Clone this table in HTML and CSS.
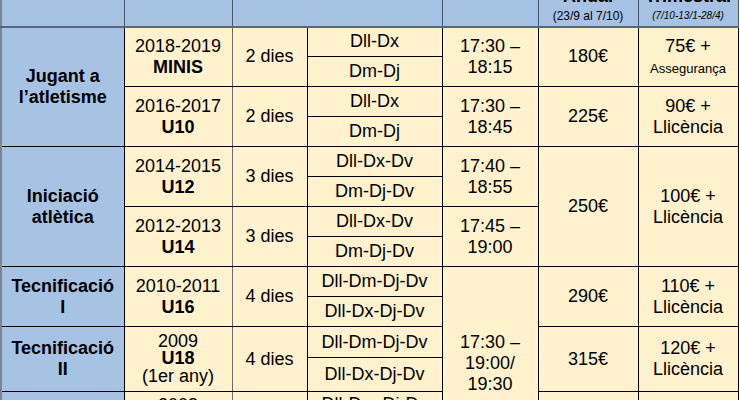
FILE: index.html
```html
<!DOCTYPE html>
<html lang="ca">
<head>
<meta charset="utf-8">
<title>Horaris i quotes</title>
<link rel="stylesheet" href="styles.css">
</head>
<body>
<table class="sched">
  <colgroup>
    <col class="c-grp"><col class="c-year"><col class="c-ndays"><col class="c-days"><col class="c-time"><col class="c-fee"><col class="c-fee2">
  </colgroup>
  <thead>
    <tr class="head">
      <th class="h-first"></th>
      <th></th>
      <th colspan="2"></th>
      <th></th>
      <th><div class="h-title">Anual</div><div class="h-sub">(23/9 al 7/10)</div></th>
      <th><div class="h-title">Trimestral</div><div class="h-sub h-it">(7/10-13/1-28/4)</div></th>
    </tr>
  </thead>
  <tbody>
    <tr class="r30">
      <td class="grp" rowspan="4">Jugant a<br>l’atletisme</td>
      <td class="year" rowspan="2">2018-2019<br><b>MINIS</b></td>
      <td class="nd" rowspan="2">2 dies</td>
      <td class="day">Dll-Dx</td>
      <td rowspan="2">17:30 –<br>18:15</td>
      <td rowspan="2">180€</td>
      <td rowspan="2">75€ +<br><span class="small">Assegurança</span></td>
    </tr>
    <tr class="r30"><td class="day">Dm-Dj</td></tr>
    <tr class="r30">
      <td class="year" rowspan="2">2016-2017<br><b>U10</b></td>
      <td class="nd" rowspan="2">2 dies</td>
      <td class="day">Dll-Dx</td>
      <td rowspan="2">17:30 –<br>18:45</td>
      <td rowspan="2">225€</td>
      <td rowspan="2">90€ +<br>Llicència</td>
    </tr>
    <tr class="r30"><td class="day">Dm-Dj</td></tr>

    <tr class="r30">
      <td class="grp" rowspan="4">Iniciació<br>atlètica</td>
      <td class="year" rowspan="2">2014-2015<br><b>U12</b></td>
      <td class="nd" rowspan="2">3 dies</td>
      <td class="day">Dll-Dx-Dv</td>
      <td rowspan="2">17:40 –<br>18:55</td>
      <td rowspan="4">250€</td>
      <td rowspan="4">100€ +<br>Llicència</td>
    </tr>
    <tr class="r30"><td class="day">Dm-Dj-Dv</td></tr>
    <tr class="r30">
      <td class="year" rowspan="2">2012-2013<br><b>U14</b></td>
      <td class="nd" rowspan="2">3 dies</td>
      <td class="day">Dll-Dx-Dv</td>
      <td rowspan="2">17:45 –<br>19:00</td>
    </tr>
    <tr class="r30"><td class="day">Dm-Dj-Dv</td></tr>

    <tr class="r30">
      <td class="grp" rowspan="2">Tecnificació<br>I</td>
      <td class="year" rowspan="2">2010-2011<br><b>U16</b></td>
      <td class="nd" rowspan="2">4 dies</td>
      <td class="day">Dll-Dm-Dj-Dv</td>
      <td rowspan="6">17:30 –<br>19:00/<br>19:30</td>
      <td rowspan="2">290€</td>
      <td rowspan="2">110€ +<br>Llicència</td>
    </tr>
    <tr class="r30"><td class="day">Dll-Dx-Dj-Dv</td></tr>

    <tr class="r31">
      <td class="grp" rowspan="2">Tecnificació<br>II</td>
      <td class="year tight" rowspan="2">2009<br><b>U18</b><br>(1er any)</td>
      <td class="nd" rowspan="2">4 dies</td>
      <td class="day">Dll-Dm-Dj-Dv</td>
      <td rowspan="2">315€</td>
      <td rowspan="2">120€ +<br>Llicència</td>
    </tr>
    <tr class="r34"><td class="day">Dll-Dx-Dj-Dv</td></tr>

    <tr class="r25">
      <td class="grp" rowspan="2">Tecnificació<br>II</td>
      <td class="year" rowspan="2">2008<br><b>U18</b><br>(2n any)</td>
      <td class="nd" rowspan="2">4 dies</td>
      <td class="day">Dll-Dm-Dj-Dv</td>
      <td rowspan="2">340€</td>
      <td rowspan="2">130€ +<br>Llicència</td>
    </tr>
    <tr class="r44"><td class="day">Dll-Dx-Dj-Dv</td></tr>
  </tbody>
</table>
</body>
</html>
```

FILE: styles.css
```css
html, body {
  margin: 0;
  padding: 0;
  background: #ffffff;
}

body {
  font-family: "Liberation Sans", Arial, sans-serif;
  color: #000;
}

.sched {
  border-collapse: collapse;
  table-layout: fixed;
  width: 738px;
  margin-top: -34px;
  font-size: 18px;
  line-height: normal;
}

.c-grp { width: 123px; }
.c-year { width: 108px; }
.c-ndays { width: 75px; }
.c-days { width: 135px; }
.c-time { width: 96px; }
.c-fee { width: 100px; }
.c-fee2 { width: 100px; }

.sched td,
.sched th {
  border: 1px solid #000;
  padding: 0 3px;
  text-align: center;
  vertical-align: middle;
  background: #fff2cc;
  font-weight: normal;
}

.sched th {
  background: #a6c3e4;
  vertical-align: bottom;
  padding-bottom: 3px;
  border-color: #48586b;
  border-bottom: 2px solid #56677e;
}

.sched th.h-first {
  border-left: 2px solid #7b8591;
}

.head { height: 60px; }

.h-title {
  font-weight: bold;
  font-size: 18px;
}

.h-sub {
  font-size: 12px;
  margin-top: 2px;
}

.h-it {
  font-size: 10px;
  font-style: italic;
  line-height: 14px;
}

.sched td.grp {
  background: #a6c3e4;
  font-weight: bold;
  border-left: 2px solid #7b8591;
}

.sched td.year {
  border-right: 1px solid #6b6b6b;
}

.sched td.tight {
  line-height: 17.5px;
}

.small {
  font-size: 13px;
}

.r30 { height: 30px; }
.r31 { height: 31px; }
.r34 { height: 34px; }
.r25 { height: 25px; }
.r44 { height: 44px; }
```
